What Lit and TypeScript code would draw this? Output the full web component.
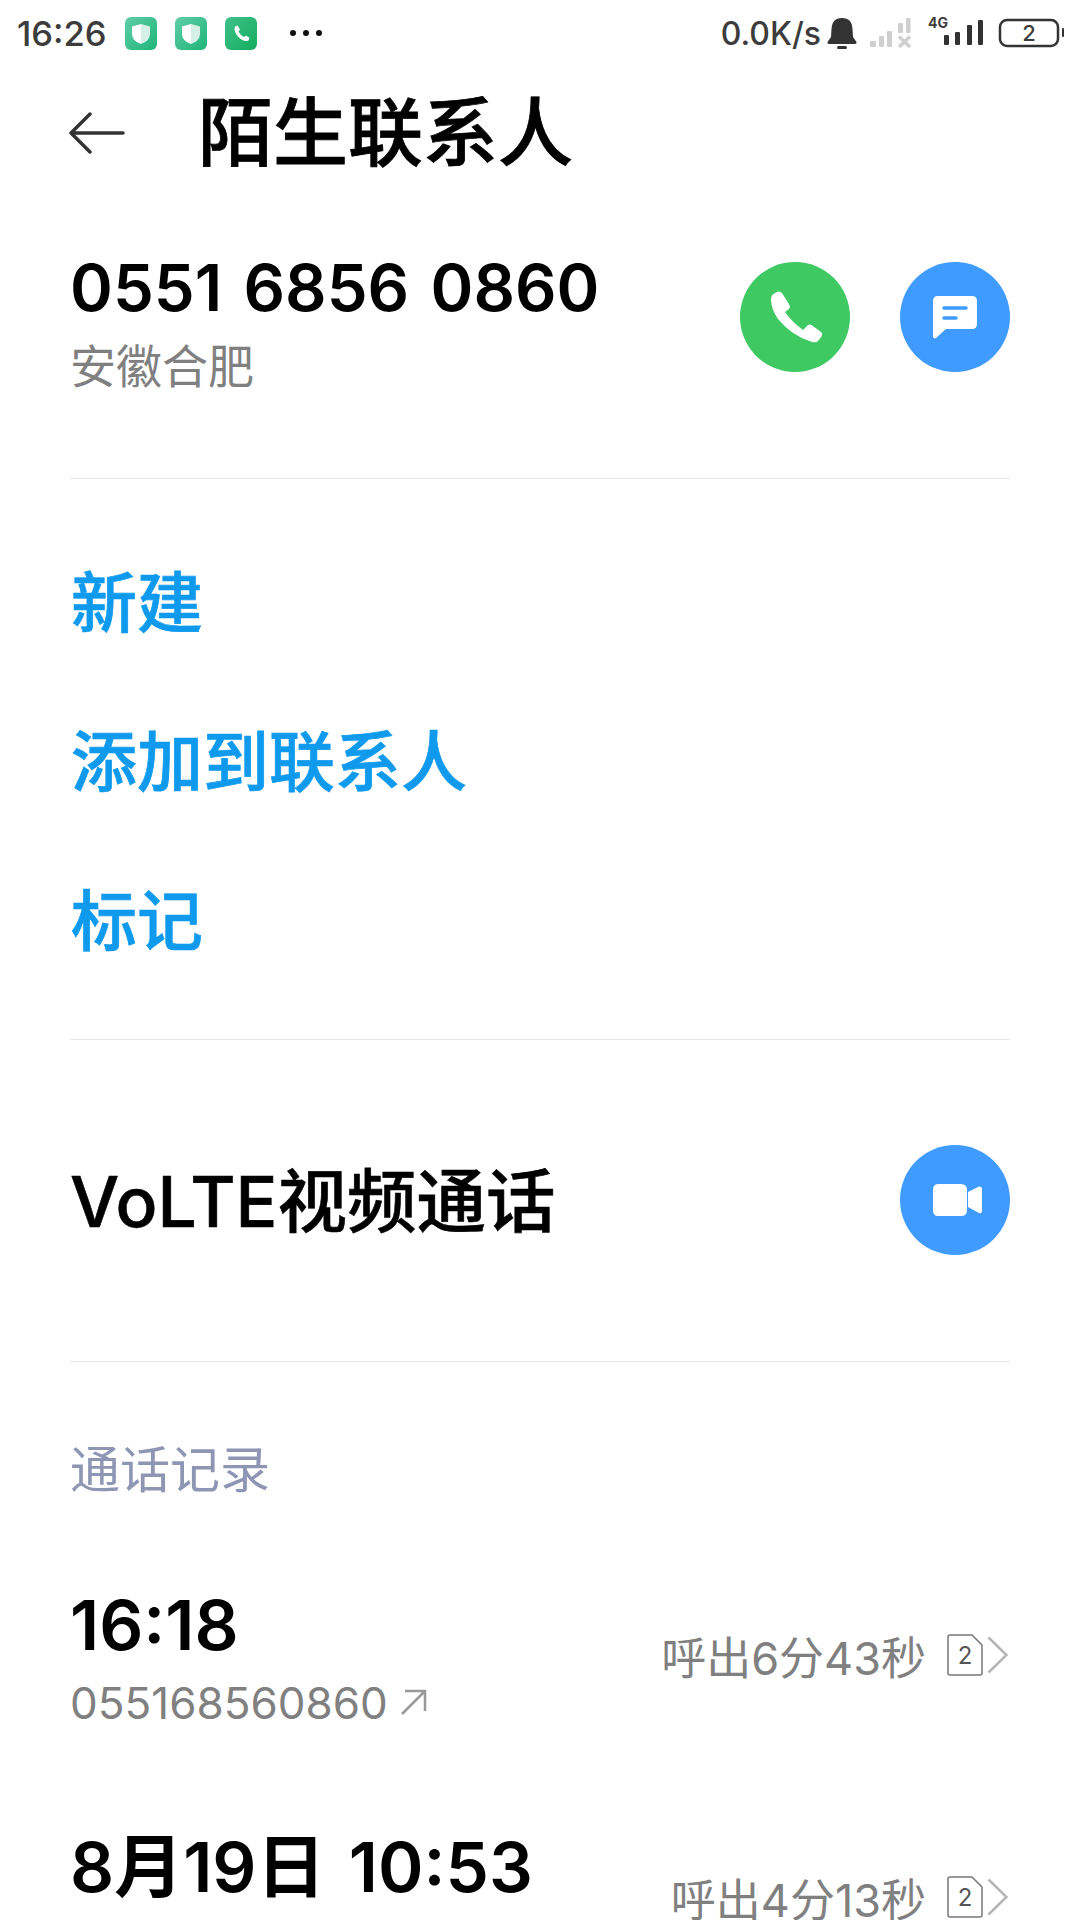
import { LitElement, html, css, svg } from "lit";
import { customElement } from "lit/decorators.js";

const shield = (id: string, left: string, right: string) => svg`
  <rect width="32" height="33" rx="6" fill="url(#${id})"/>
  <path d="M16 7 L25 9.500 V17 Q25 24 16 27 Z" fill="${right}"/>
  <path d="M16 7 L7 9.500 V17 Q7 24 16 27 Z" fill="${left}"/>`;

const grad = (id: string, a: string, b: string) => svg`
  <defs><linearGradient id="${id}" x1="0" y1="0" x2="1" y2="1"><stop offset="0" stop-color="${a}"/><stop offset="1" stop-color="${b}"/></linearGradient></defs>`;

@customElement("app-root")
export class AppRoot extends LitElement {
  static styles = css`
    :host {
      display: block;
      width: 1080px;
      height: 1920px;
      overflow: hidden;
      background: #fff;
      font-family: Inter, "Noto Sans CJK SC", sans-serif;
      color: #000;
    }
    svg { display: block; flex: none; }
    .status {
      height: 54px;
      padding: 12px 14px 0 17px;
      box-sizing: border-box;
      display: flex;
      justify-content: space-between;
      align-items: center;
      color: #3c3c3c;
      font-size: 34.5px;
      font-weight: 500;
    }
    .group { display: flex; align-items: center; }
    .clock { margin-right: 18px; }
    .app { margin-right: 18px; }
    .dots { margin-left: 14px; }
    .speed { margin-right: 6px; font-size: 32px; }
    .signal { margin-left: 13px; }
    .net { margin-left: 17px; overflow: visible; }
    .batt { margin-left: 12px; }
    .nav {
      height: 158px;
      padding-left: 69px;
      display: flex;
      align-items: center;
    }
    .nav h1 {
      margin: 0 0 0 73px;
      font-size: 75px;
      font-weight: 500;
      -webkit-text-stroke: 0.8px #000;
      line-height: 90px;
      white-space: nowrap;
    }
    .section {
      margin: 0 70px;
      box-sizing: border-box;
      border-bottom: 1px solid #e6e6e6;
    }
    .contact {
      height: 267px;
      padding-top: 36px;
      display: flex;
      align-items: flex-start;
      justify-content: space-between;
    }
    .number {
      font-size: 65px;
      font-weight: 600;
      word-spacing: 5px;
      line-height: 80px;
      white-space: nowrap;
    }
    .place {
      font-size: 46px;
      line-height: 56px;
      color: #808080;
      margin-top: 10px;
    }
    .buttons { display: flex; gap: 50px; margin-top: 14px; }
    .circle { width: 110px; height: 110px; }
    .actions {
      height: 561px;
      padding-top: 39px;
    }
    .action {
      height: 159px;
      display: flex;
      align-items: center;
      padding-left: 1px;
      font-size: 66px;
      font-weight: 500;
      -webkit-text-stroke: 0.7px #0f9aee;
      color: #0f9aee;
      white-space: nowrap;
    }
    .video {
      height: 322px;
      padding-bottom: 2px;
      display: flex;
      align-items: center;
      justify-content: space-between;
      font-size: 69.5px;
      font-weight: 500;
    }
    .video span { margin-bottom: 6px; -webkit-text-stroke: 0.6px #000; }
    .log { margin: 0 70px; }
    .log-title {
      padding-top: 78px;
      font-size: 50px;
      line-height: 60px;
      color: #8e96b3;
    }
    .calls { padding-top: 35px; }
    .call {
      height: 242px;
      display: flex;
      justify-content: space-between;
      align-items: center;
    }
    .left { padding-top: 3px; }
    .time {
      font-size: 69px;
      font-weight: 600;
      word-spacing: 6px;
      line-height: 80px;
      white-space: nowrap;
    }
    .sub {
      display: flex;
      align-items: center;
      height: 56px;
      font-size: 44px;
      color: #808080;
      gap: 12px;
      margin-top: 10px;
    }
    .right {
      display: flex;
      align-items: center;
      font-size: 45px;
      color: #808080;
      white-space: nowrap;
      padding-right: 2px;
      margin-bottom: 2px;
    }
    .sim { margin-left: 21px; }
    .chev { margin-left: 4px; }
    .sim-num { font-size: 24px; fill: #555; }
    .batt-num { font-size: 22px; fill: #3c3c3c; }
    .g4 { font-size: 14px; font-weight: 700; fill: #3c3c3c; }
  `;

  private sim() {
    return html`<svg class="sim" width="36" height="42" viewBox="0 0 36 42">
      <path d="M3 1 H25 L35 11 V39 Q35 41 33 41 H3 Q1 41 1 39 V3 Q1 1 3 1 Z" fill="none" stroke="#777" stroke-width="1.500"/>
      <text class="sim-num" x="18" y="30" text-anchor="middle">2</text>
    </svg>`;
  }
  private chev() {
    return html`<svg class="chev" width="21" height="38" viewBox="0 0 21 38">
      <path d="M1.500 1.500 L19.500 19 L1.500 36.500" fill="none" stroke="#b5b5b5" stroke-width="2.500"/>
    </svg>`;
  }

  private call(time: string, dur: string, sub: unknown) {
    return html`<div class="call">
      <div class="left">
        <div class="time">${time}</div>
        ${sub}
      </div>
      <div class="right">${dur}${this.sim()}${this.chev()}</div>
    </div>`;
  }

  render() {
    return html`
      <div class="status">
        <div class="group">
          <span class="clock">16:26</span>
          <svg class="app" width="32" height="33" viewBox="0 0 32 33">
            ${grad("g1", "#5fcda8", "#1fb578")}
            ${shield("g1", "#ffffff", "#d5f0e6")}
          </svg>
          <svg class="app" width="32" height="33" viewBox="0 0 32 33">
            ${grad("g2", "#5fcda8", "#1fb578")}
            ${shield("g2", "#ffffff", "#d5f0e6")}
          </svg>
          <svg class="app" width="32" height="33" viewBox="0 0 32 33">
            ${grad("g3", "#3fc08a", "#14ad5e")}
            <rect width="32" height="33" rx="6" fill="url(#g3)"/>
            <path d="M10 9.500 L12.500 8.500 L15 12.500 L13.500 14.500 Q15.500 18.500 19 20 L21 18.500 L24.500 21 L23.500 23.500 Q21.500 24.500 18.500 23.500 Q11.500 20.500 9.500 13 Q9.500 11 10 9.500 Z" fill="#fff"/>
          </svg>
          <svg class="dots" width="34" height="8" viewBox="0 0 34 8">
            <circle cx="4" cy="4" r="3" fill="#111"/><circle cx="17" cy="4" r="3" fill="#111"/><circle cx="30" cy="4" r="3" fill="#111"/>
          </svg>
        </div>
        <div class="group">
          <span class="speed">0.0K/s</span>
          <svg width="30" height="32" viewBox="0 0 30 32">
            <path d="M15 1 Q25 1 25.500 12 L26 20 L29.500 25 Q30 27 28 27 H2 Q0 27 .5 25 L4 20 L4.500 12 Q5 1 15 1 Z" fill="#333"/>
            <rect x="10" y="29" width="10" height="3" rx="1.500" fill="#333"/>
          </svg>
          <svg class="signal" width="41" height="32" viewBox="0 0 41 32">
            <g fill="#cfcfcf">
              <rect x="0" y="24" width="6" height="6" rx="1"/>
              <rect x="9" y="19" width="5" height="11" rx="1"/>
              <rect x="17" y="14" width="5" height="16" rx="1"/>
              <rect x="28" y="6" width="5" height="10" rx="1"/>
              <rect x="36" y="1" width="4.500" height="15" rx="1"/>
            </g>
            <path d="M29 19.500 L40 30 M40 19.500 L29 30" stroke="#cfcfcf" stroke-width="3.500"/>
          </svg>
          <svg class="net" width="58" height="34" viewBox="0 0 58 34">
            <text class="g4" x="0" y="12">4G</text>
            <rect x="16" y="19" width="5" height="10" rx="1" fill="#333"/>
            <rect x="27" y="16" width="5" height="13" rx="1" fill="#333"/>
            <rect x="39" y="9" width="5" height="20" rx="1" fill="#333"/>
            <rect x="50" y="4" width="5" height="25" rx="1" fill="#333"/>
          </svg>
          <svg class="batt" width="68" height="30" viewBox="0 0 68 30">
            <rect x="2" y="2" width="58" height="26" rx="7" fill="none" stroke="#333" stroke-width="2.500"/>
            <rect x="64" y="10" width="2" height="9" rx="1" fill="#333"/>
            <text class="batt-num" x="31" y="23" text-anchor="middle">2</text>
          </svg>
        </div>
      </div>

      <div class="nav">
        <svg width="56" height="42" viewBox="0 0 56 42">
          <path d="M54 21 H2 M21 2 L2 21 L21 40" fill="none" stroke="#333" stroke-width="3.500" stroke-linecap="round" stroke-linejoin="round"/>
        </svg>
        <h1>陌生联系人</h1>
      </div>

      <div class="section contact">
        <div>
          <div class="number">0551 6856 0860</div>
          <div class="place">安徽合肥</div>
        </div>
        <div class="buttons">
          <svg class="circle" viewBox="0 0 110 110">
            <circle cx="55" cy="55" r="55" fill="#3fc963"/>
            <path d="M35 31 Q39 28 42 31 L49.500 43 Q50.500 45 49 47 L45 50 Q52 60 63 68 L67.500 63.500 Q69.500 62 71.500 63 L81 70 Q83 72 81.500 74.500 L78 79 Q76 81 72 80 Q52 74 38 57 Q31 47 31 37 Q31 33 35 31 Z" fill="#fff"/>
          </svg>
          <svg class="circle" viewBox="0 0 110 110">
            <circle cx="55" cy="55" r="55" fill="#3f9bff"/>
            <path d="M38 34 H72 Q77 34 77 39 V62 Q77 67 72 67 H46 L36 76 Q33 77.500 33 74 V39 Q33 34 38 34 Z" fill="#fff"/>
            <path d="M44 46 H66 M44 56 H56" stroke="#3f9bff" stroke-width="3.500" stroke-linecap="round"/>
          </svg>
        </div>
      </div>

      <div class="section actions">
        <div class="action">新建</div>
        <div class="action">添加到联系人</div>
        <div class="action">标记</div>
      </div>

      <div class="section video">
        <span>VoLTE视频通话</span>
        <svg class="circle" viewBox="0 0 110 110">
          <circle cx="55" cy="55" r="55" fill="#3f9bff"/>
          <path d="M38 39 H61 Q67 39 67 45 V65 Q67 71 61 71 H38 Q33 71 33 65 V45 Q33 39 38 39 Z" fill="#fff"/>
          <path d="M68 47 L79 41.500 Q82 41 82 44 V66 Q82 69 79 68 L68 62 Z" fill="#fff"/>
        </svg>
      </div>

      <div class="log">
        <div class="log-title">通话记录</div>
        <div class="calls">
          ${this.call("16:18", "呼出6分43秒", html`<div class="sub">055168560860
            <svg width="27" height="27" viewBox="0 0 27 27">
              <path d="M2 25 L25 2 M5 2 H25 V22" fill="none" stroke="#999" stroke-width="2.500"/>
            </svg></div>`)}
          ${this.call("8月19日 10:53", "呼出4分13秒", html`<div class="sub"></div>`)}
        </div>
      </div>
    `;
  }
}
